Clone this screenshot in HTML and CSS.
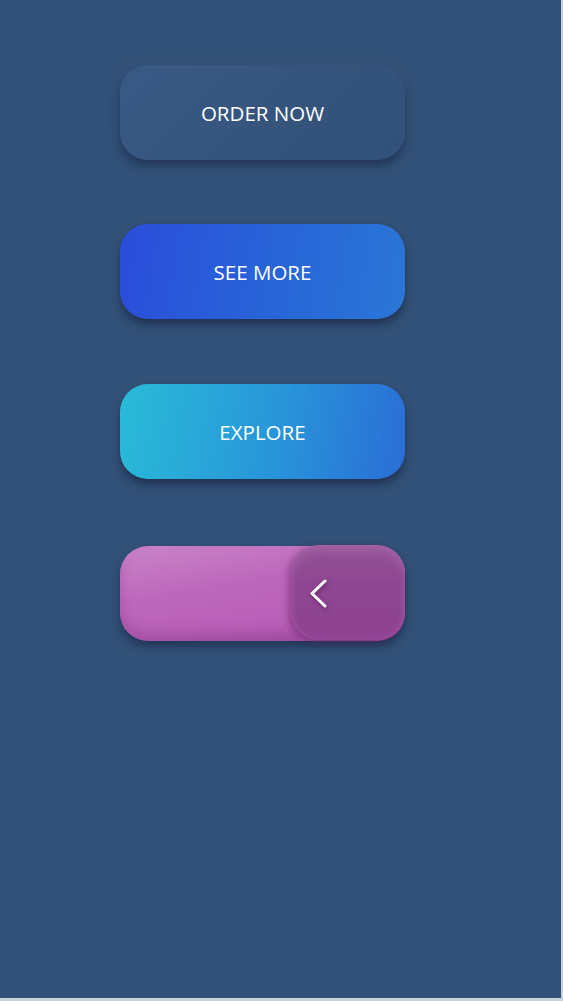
FILE: index.html
```html
<!DOCTYPE html>
<html lang="en">
<head>
    <meta charset="UTF-8">
    <title>Buttons</title>
    <link rel="stylesheet" href="styles.css">
</head>
<body>
    <div class="page">
        <div class="list">
            <a href="#" class="btn btn-order">ORDER NOW</a>
            <a href="#" class="btn btn-more">SEE MORE</a>
            <a href="#" class="btn btn-explore">EXPLORE</a>
            <div class="btn btn-slide">
                <span class="knob">
                    <svg width="20" height="30" viewBox="0 0 20 30">
                        <polyline points="15,2 2,14.5 15,27" fill="none" stroke="#fff" stroke-width="3" stroke-linecap="round" stroke-linejoin="round" />
                    </svg>
                </span>
            </div>
        </div>
    </div>
</body>
</html>
```

FILE: styles.css
```css
* {
    margin: 0;
    padding: 0;
    box-sizing: border-box;
}

html {
    background-color: #c9d0da;
}

body {
    font-family: "Open Sans", "Noto Sans", sans-serif;
}

.page {
    width: 561px;
    height: 998px;
    background-color: #325178;
}

.list {
    display: flex;
    flex-direction: column;
    align-items: flex-start;
    padding: 65px 0 0 120px;
}

.btn {
    display: flex;
    align-items: center;
    justify-content: center;
    width: 285px;
    height: 95px;
    border-radius: 28px;
    color: #fff;
    font-size: 20.5px;
    text-decoration: none;
    box-shadow: 0 6px 8px rgba(20, 30, 55, 0.55);
}

.btn-order {
    background: linear-gradient(135deg, #3a5a86 0%, #34547c 60%, #31507a 100%);
    box-shadow: 0 6px 8px rgba(20, 30, 55, 0.5), 0 -2px 10px rgba(70, 100, 140, 0.25);
}

.btn-more {
    margin-top: 64px;
    background: linear-gradient(100deg, #2a4ddb 0%, #2867d8 60%, #2a76d6 100%);
}

.btn-explore {
    margin-top: 65px;
    background: linear-gradient(100deg, #29bcd8 0%, #2895d9 55%, #2a6dd6 100%);
}

.btn-slide {
    position: relative;
    margin-top: 67px;
    justify-content: flex-start;
    background: linear-gradient(170deg, #c984c7 0%, #bd67bc 40%, #b960b8 70%, #a94fa9 100%);
    box-shadow: 0 6px 8px rgba(20, 30, 55, 0.5), inset 0 -8px 12px rgba(130, 50, 130, 0.35);
}

.knob {
    position: absolute;
    top: -1px;
    right: 0;
    width: 114px;
    height: 95px;
    border-radius: 28px;
    display: flex;
    align-items: center;
    padding: 3px 0 0 19px;
    background: linear-gradient(180deg, #925294 0%, #8f4692 40%, #8d4290 100%);
    box-shadow: -3px 2px 6px rgba(90, 30, 90, 0.45), inset 0 6px 10px rgba(200, 140, 200, 0.3), inset 0 -3px 6px rgba(170, 80, 170, 0.4);
}

.knob svg {
    filter: drop-shadow(1px 2px 2px rgba(60, 10, 60, 0.5));
}
```
